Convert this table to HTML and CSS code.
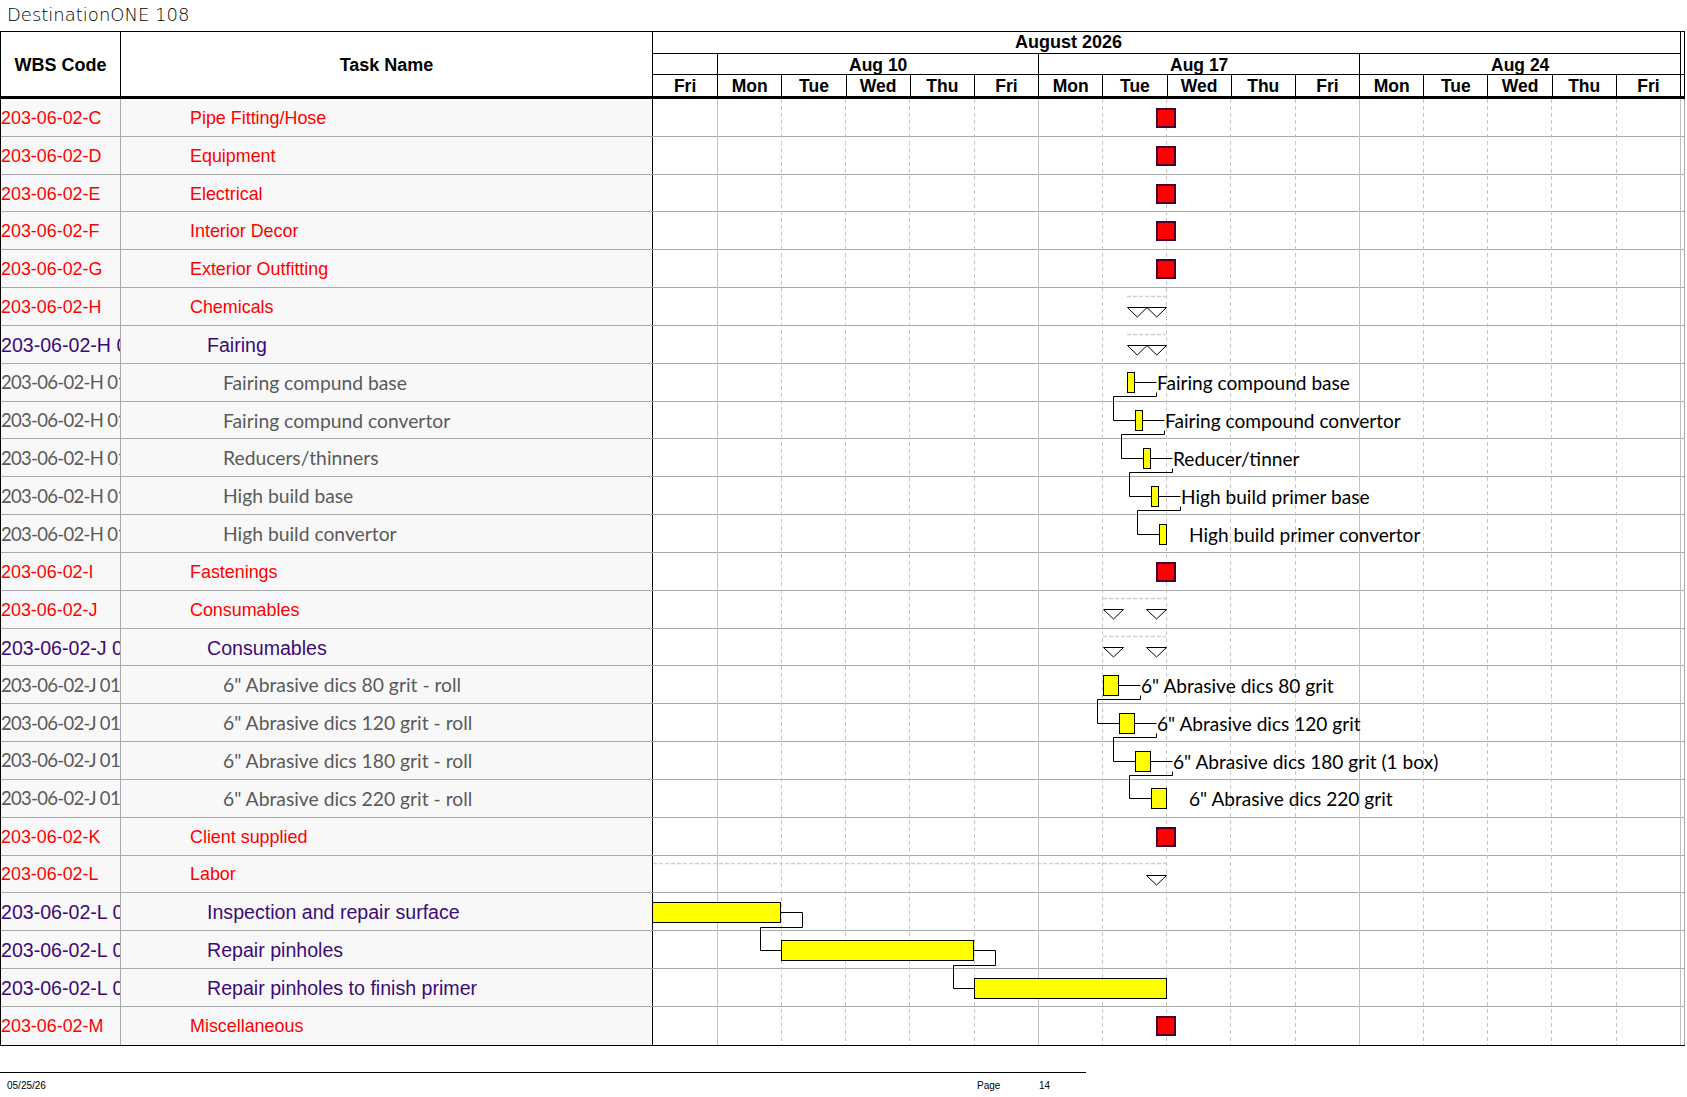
FILE: index.html
```html
<!DOCTYPE html>
<html>
<head>
<meta charset="utf-8">
<title>DestinationONE 108</title>
<link rel="stylesheet" href="styles.css">
</head>
<body>
<div class="title">DestinationONE 108</div>
<div class="gantt">
  <div class="head">
    <div class="hcell wbs-h">WBS Code</div>
    <div class="hcell task-h">Task Name</div>
    <div class="chart-h">
      <div class="month-row">August 2026</div>
      <div class="week-row">
        <div class="week w-first"></div>
        <div class="week">Aug 10</div>
        <div class="week">Aug 17</div>
        <div class="week">Aug 24</div>
        <div class="week w-rest"></div>
      </div>
      <div class="day-row">
        <div class="day">Fri</div>
        <div class="day">Mon</div>
        <div class="day">Tue</div>
        <div class="day">Wed</div>
        <div class="day">Thu</div>
        <div class="day">Fri</div>
        <div class="day">Mon</div>
        <div class="day">Tue</div>
        <div class="day">Wed</div>
        <div class="day">Thu</div>
        <div class="day">Fri</div>
        <div class="day">Mon</div>
        <div class="day">Tue</div>
        <div class="day">Wed</div>
        <div class="day">Thu</div>
        <div class="day">Fri</div>
        <div class="day d-rest"></div>
      </div>
    </div>
  </div>
  <div class="body">
    <div class="row l1"><div class="wbs">203-06-02-C</div><div class="task">Pipe Fitting/Hose</div><div class="chart-cell"></div></div>
    <div class="row l1"><div class="wbs">203-06-02-D</div><div class="task">Equipment</div><div class="chart-cell"></div></div>
    <div class="row l1"><div class="wbs">203-06-02-E</div><div class="task">Electrical</div><div class="chart-cell"></div></div>
    <div class="row l1"><div class="wbs">203-06-02-F</div><div class="task">Interior Decor</div><div class="chart-cell"></div></div>
    <div class="row l1"><div class="wbs">203-06-02-G</div><div class="task">Exterior Outfitting</div><div class="chart-cell"></div></div>
    <div class="row l1"><div class="wbs">203-06-02-H</div><div class="task">Chemicals</div><div class="chart-cell"></div></div>
    <div class="row l2"><div class="wbs">203-06-02-H 01</div><div class="task">Fairing</div><div class="chart-cell"></div></div>
    <div class="row l3"><div class="wbs">203-06-02-H 01.01</div><div class="task">Fairing compund base</div><div class="chart-cell"></div></div>
    <div class="row l3"><div class="wbs">203-06-02-H 01.02</div><div class="task">Fairing compund convertor</div><div class="chart-cell"></div></div>
    <div class="row l3"><div class="wbs">203-06-02-H 01.03</div><div class="task">Reducers/thinners</div><div class="chart-cell"></div></div>
    <div class="row l3"><div class="wbs">203-06-02-H 01.04</div><div class="task">High build base</div><div class="chart-cell"></div></div>
    <div class="row l3"><div class="wbs">203-06-02-H 01.05</div><div class="task">High build convertor</div><div class="chart-cell"></div></div>
    <div class="row l1"><div class="wbs">203-06-02-I</div><div class="task">Fastenings</div><div class="chart-cell"></div></div>
    <div class="row l1"><div class="wbs">203-06-02-J</div><div class="task">Consumables</div><div class="chart-cell"></div></div>
    <div class="row l2"><div class="wbs">203-06-02-J 01</div><div class="task">Consumables</div><div class="chart-cell"></div></div>
    <div class="row l3"><div class="wbs">203-06-02-J 01.01</div><div class="task">6" Abrasive dics 80 grit - roll</div><div class="chart-cell"></div></div>
    <div class="row l3"><div class="wbs">203-06-02-J 01.02</div><div class="task">6" Abrasive dics 120 grit - roll</div><div class="chart-cell"></div></div>
    <div class="row l3"><div class="wbs">203-06-02-J 01.03</div><div class="task">6" Abrasive dics 180 grit - roll</div><div class="chart-cell"></div></div>
    <div class="row l3"><div class="wbs">203-06-02-J 01.04</div><div class="task">6" Abrasive dics 220 grit - roll</div><div class="chart-cell"></div></div>
    <div class="row l1"><div class="wbs">203-06-02-K</div><div class="task">Client supplied</div><div class="chart-cell"></div></div>
    <div class="row l1"><div class="wbs">203-06-02-L</div><div class="task">Labor</div><div class="chart-cell"></div></div>
    <div class="row l2"><div class="wbs">203-06-02-L 01</div><div class="task">Inspection and repair surface</div><div class="chart-cell"></div></div>
    <div class="row l2"><div class="wbs">203-06-02-L 02</div><div class="task">Repair pinholes</div><div class="chart-cell"></div></div>
    <div class="row l2"><div class="wbs">203-06-02-L 03</div><div class="task">Repair pinholes to finish primer</div><div class="chart-cell"></div></div>
    <div class="row l1 last"><div class="wbs">203-06-02-M</div><div class="task">Miscellaneous</div><div class="chart-cell"></div></div>

    <svg class="overlay" width="1031" height="946" viewBox="0 0 1031 946">
      <path class="grid-solid" d="M64.5 0V946M385.5 0V946M706.5 0V946M1027.5 0V946"/>
      <path class="grid-dash" d="M128.5 0V946M192.5 0V946M256.5 0V946M321.5 0V946M449.5 0V946M513.5 0V946M577.5 0V946M642.5 0V946M770.5 0V946M834.5 0V946M898.5 0V946M963.5 0V946"/>

      <path class="sum-line" d="M474 197.5H513M474 235.5H513M450 499.5H513M450 537.5H513M0 764.5H513"/>
      <polygon class="tri" points="474.5,208.5 494,208.5 484.25,218"/>
      <polygon class="tri" points="494,208.5 513.5,208.5 503.75,218"/>
      <polygon class="tri" points="474.5,246.5 494,246.5 484.25,256"/>
      <polygon class="tri" points="494,246.5 513.5,246.5 503.75,256"/>
      <polygon class="tri" points="450.5,510.5 470.5,510.5 460.5,520"/>
      <polygon class="tri" points="493.5,510.5 513.5,510.5 503.5,520"/>
      <polygon class="tri" points="450.5,548.5 470.5,548.5 460.5,558"/>
      <polygon class="tri" points="493.5,548.5 513.5,548.5 503.5,558"/>
      <polygon class="tri" points="493.5,776.5 513.5,776.5 503.5,786"/>

      <rect class="ms" x="504" y="10" width="18" height="18"/>
      <rect class="ms" x="504" y="48" width="18" height="18"/>
      <rect class="ms" x="504" y="86" width="18" height="18"/>
      <rect class="ms" x="504" y="123" width="18" height="18"/>
      <rect class="ms" x="504" y="161" width="18" height="18"/>
      <rect class="ms" x="504" y="464" width="18" height="18"/>
      <rect class="ms" x="504" y="729" width="18" height="18"/>
      <rect class="ms" x="504" y="918" width="18" height="18"/>

      <path class="link" d="M481.5 283.5H503.5M503.5 293.5V297.5H460.5V321.5H482.5"/>
      <path class="link" d="M489.5 321.5H511.5M511.5 331.5V335.5H468.5V359.5H490.5"/>
      <path class="link" d="M497.5 359.5H519.5M519.5 369.5V373.5H476.5V397.5H498.5"/>
      <path class="link" d="M505.5 397.5H527.5M527.5 407.5V411.5H484.5V435.5H506.5"/>
      <rect class="bar" x="474.5" y="273.5" width="7" height="20"/>
      <rect class="bar" x="482.5" y="311.5" width="7" height="20"/>
      <rect class="bar" x="490.5" y="349.5" width="7" height="20"/>
      <rect class="bar" x="498.5" y="387.5" width="7" height="20"/>
      <rect class="bar" x="506.5" y="425.5" width="7" height="20"/>
      <text class="lbl" x="504" y="290.5">Fairing compound base</text>
      <text class="lbl" x="512" y="328.5">Fairing compound convertor</text>
      <text class="lbl" x="520" y="366.5">Reducer/tinner</text>
      <text class="lbl" x="528" y="404.5">High build primer base</text>
      <text class="lbl" x="536" y="442.5">High build primer convertor</text>

      <path class="link" d="M465.5 586.5H487.5M487.5 596.5V600.5H444.5V624.5H466.5"/>
      <path class="link" d="M481.5 624.5H503.5M503.5 634.5V638.5H460.5V662.5H482.5"/>
      <path class="link" d="M497.5 662.5H519.5M519.5 672.5V676.5H476.5V699.5H498.5"/>
      <rect class="bar" x="450.5" y="576.5" width="15" height="20"/>
      <rect class="bar" x="466.5" y="614.5" width="15" height="20"/>
      <rect class="bar" x="482.5" y="652.5" width="15" height="20"/>
      <rect class="bar" x="498.5" y="689.5" width="15" height="20"/>
      <text class="lbl" x="488" y="593.5">6" Abrasive dics 80 grit</text>
      <text class="lbl" x="504" y="631.5">6" Abrasive dics 120 grit</text>
      <text class="lbl" x="520" y="669.5">6" Abrasive dics 180 grit (1 box)</text>
      <text class="lbl" x="536" y="706.5">6" Abrasive dics 220 grit</text>

      <path class="link" d="M127.5 813.5H149.5V828.5H107.5V851.5H128.5"/>
      <path class="link" d="M320.5 851.5H342.5V866.5H300.5V889.5H321.5"/>
      <rect class="bar" x="-1" y="803.5" width="128.5" height="20"/>
      <rect class="bar" x="128.5" y="841.5" width="192" height="20"/>
      <rect class="bar" x="321.5" y="879.5" width="192" height="20"/>
    </svg>
  </div>
</div>
<div class="footer">
  <div class="f-date">05/25/26</div>
  <div class="f-page">Page</div>
  <div class="f-num">14</div>
</div>
</body>
</html>
```

FILE: styles.css
```css
* {
  box-sizing: border-box;
}

body {
  margin: 0;
  background: #ffffff;
  color: #000000;
  font-family: "Liberation Sans", Arial, sans-serif;
}

.title {
  height: 31px;
  padding-left: 7px;
  font-family: "DejaVu Sans", sans-serif;
  font-weight: 200;
  font-size: 18px;
  line-height: 30px;
  color: #000000;
}

.gantt {
  width: 1685px;
  border: 1px solid #000000;
  border-right: none;
}

/* ---------- header ---------- */
.head {
  display: flex;
  height: 67px;
  border-bottom: 3px solid #000000;
  background: #ffffff;
}

.hcell {
  display: flex;
  align-items: center;
  justify-content: center;
  padding-top: 2px;
  font-weight: bold;
  font-size: 18px;
  border-right: 1px solid #000000;
}

.wbs-h {
  width: 120px;
}

.task-h {
  width: 532px;
}

.chart-h {
  width: 1032px;
  border-right: 1px solid #000000;
  font-weight: bold;
  font-size: 17.5px;
}

.month-row {
  height: 22px;
  margin-right: 3px;
  line-height: 21px;
  padding-left: 362px;
  font-size: 18px;
  border-bottom: 1px solid #000000;
  border-right: 1px solid #000000;
  white-space: nowrap;
}

.week-row {
  display: flex;
  height: 21px;
  border-bottom: 1px solid #000000;
}

.week {
  width: 321px;
  padding-top: 2px;
  line-height: 18px;
  text-align: center;
  border-left: 1px solid #000000;
}

.week.w-first {
  width: 64.2px;
  border-left: none;
}

.week.w-rest {
  width: auto;
  flex: 1;
}

.day-row {
  display: flex;
  height: 21px;
}

.day {
  width: 64.2px;
  padding-top: 2px;
  line-height: 19px;
  text-align: center;
  border-left: 1px solid #000000;
}

.day:first-child {
  border-left: none;
}

.day.d-rest {
  width: auto;
  flex: 1;
}

/* ---------- body ---------- */
.body {
  position: relative;
}

.row {
  display: flex;
  height: 37.83px;
  border-bottom: 1px solid #a9a9a9;
}

.row.last {
  border-bottom: none;
}

.wbs {
  width: 120px;
  flex: none;
  display: flex;
  align-items: center;
  padding-left: 0;
  white-space: nowrap;
  overflow: hidden;
  background: #f8f8f8;
  border-right: 1px solid #a9a9a9;
}

.task {
  width: 532px;
  flex: none;
  display: flex;
  align-items: center;
  white-space: nowrap;
  overflow: hidden;
  background: #f8f8f8;
  border-right: 1px solid #000000;
}

.chart-cell {
  flex: 1;
  background: #ffffff;
  border-right: 1px solid #a9a9a9;
}

.l1 {
  color: #ff0000;
  font-size: 17.9px;
}

.l1 .wbs,
.l1 .task,
.l2 .wbs,
.l2 .task {
  padding-top: 2px;
}

.l1 .task {
  padding-left: 69px;
}

.l2 {
  color: #3b0b7a;
  font-size: 19.6px;
}

.l2 .task {
  padding-left: 86px;
}

.l3 {
  color: #5a5a5a;
  font-family: Lato, "Open Sans", sans-serif;
  font-size: 19.3px;
}

.l3 .wbs {
  font-size: 18.5px;
  letter-spacing: -0.7px;
}

.l3 .task {
  padding-left: 102px;
}

/* ---------- chart overlay ---------- */
.overlay {
  position: absolute;
  left: 652px;
  top: 0;
  width: 1031px;
  height: 946px;
  overflow: hidden;
  pointer-events: none;
}

.grid-solid {
  fill: none;
  stroke: #c2c2c2;
  stroke-width: 1;
}

.grid-dash {
  fill: none;
  stroke: #c6c6c6;
  stroke-width: 1;
  stroke-dasharray: 4 3;
}

.sum-line {
  fill: none;
  stroke: #d0d0d0;
  stroke-width: 1.5;
  stroke-dasharray: 4 2;
}

.tri {
  fill: #ffffff;
  stroke: #000000;
  stroke-width: 1;
}

.ms {
  fill: #ff0000;
  stroke: #4b0033;
  stroke-width: 2;
}

.bar {
  fill: #ffff00;
  stroke: #000000;
  stroke-width: 1;
}

.link {
  fill: none;
  stroke: #000000;
  stroke-width: 1;
}

.lbl {
  font-family: Lato, "Open Sans", sans-serif;
  font-size: 19.1px;
  fill: #000000;
}

/* ---------- footer ---------- */
.footer {
  display: flex;
  width: 1086px;
  margin-top: 26px;
  padding-top: 7px;
  border-top: 1px solid #000000;
  font-size: 10px;
  line-height: 12px;
}

.f-date {
  width: 977px;
  padding-left: 7px;
}

.f-page {
  width: 62px;
}
```
